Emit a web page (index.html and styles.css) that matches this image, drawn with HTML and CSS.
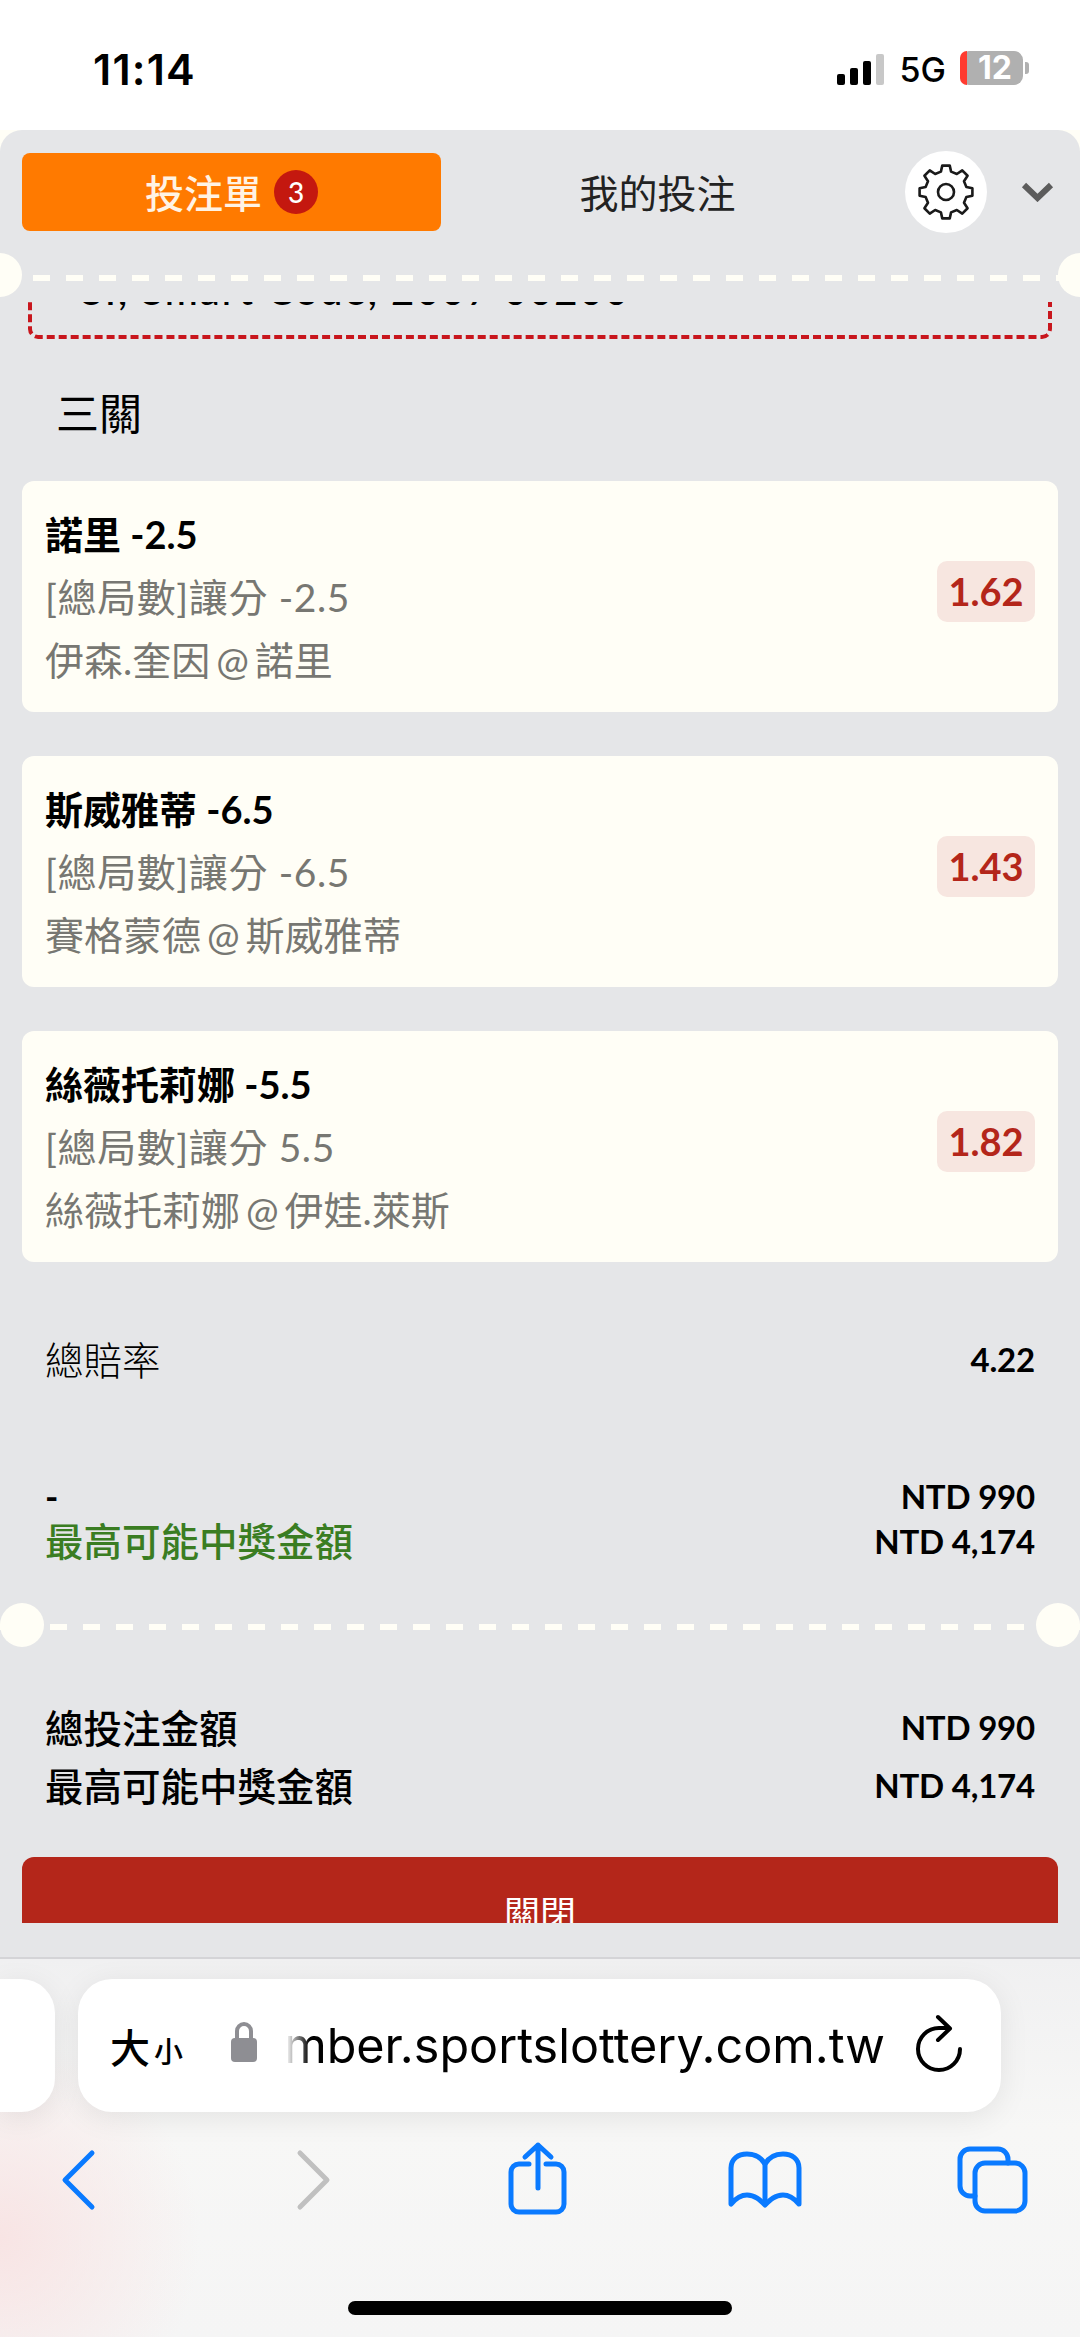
FILE: index.html
```html
<!DOCTYPE html>
<html lang="zh-Hant">
<head>
    <meta charset="UTF-8">
    <meta name="viewport" content="width=device-width, initial-scale=1.0">
    <title>投注單</title>
    <link rel="stylesheet" href="styles.css">
</head>
<body>
    <div class="status">
        <div class="time">11:14</div>
        <div class="status_right">
            <div class="signal"><span></span><span></span><span></span><span class="off"></span></div>
            <div class="net">5G</div>
            <div class="battery"><span class="low"></span><span class="level">12</span></div>
            <div class="battery_tip"></div>
        </div>
    </div>

    <div class="panel_wrap">
    <div class="panel">
        <div class="tabs">
            <div class="tab active">投注單<span class="count">3</span></div>
            <div class="tab">我的投注</div>
            <div class="gear">
                <svg width="56" height="56" viewBox="0 0 56 56">
                    <polygon points="22.92,7.63 24.25,1.6 31.75,1.6 33.08,7.63 38.82,10 44.25,6.43 49.57,11.75 46,17.18 48.37,22.92 54.4,24.25 54.4,31.75 48.37,33.08 46,38.82 49.57,44.25 44.25,49.57 38.82,46 33.08,48.37 31.75,54.4 24.25,54.4 22.92,48.37 17.18,46 11.75,49.57 6.43,44.25 10,38.82 7.63,33.08 1.6,31.75 1.6,24.25 7.63,22.92 10,17.18 6.43,11.75 11.75,6.43 17.18,10"></polygon>
                    <circle cx="28" cy="28" r="8"></circle>
                </svg>
            </div>
            <svg class="chevron" width="33" height="20" viewBox="0 0 33 20">
                <path d="M3 3 L16.5 16 L30 3"></path>
            </svg>
        </div>

        <div class="cut cut_top"></div>

        <div class="slip">
            <div class="promo">
                <div class="promo_text">SI, Smart Code, 2007 00200</div>
            </div>

            <div class="parlay">三關</div>

            <div class="bet">
                <div class="bet_info">
                    <div class="bet_name">諾里 -2.5</div>
                    <div class="bet_line bet_market">[總局數]讓分 -2.5</div>
                    <div class="bet_line bet_match">伊森.奎因 @ 諾里</div>
                </div>
                <div class="odds">1.62</div>
            </div>
            <div class="bet">
                <div class="bet_info">
                    <div class="bet_name">斯威雅蒂 -6.5</div>
                    <div class="bet_line bet_market">[總局數]讓分 -6.5</div>
                    <div class="bet_line bet_match">賽格蒙德 @ 斯威雅蒂</div>
                </div>
                <div class="odds">1.43</div>
            </div>
            <div class="bet">
                <div class="bet_info">
                    <div class="bet_name">絲薇托莉娜 -5.5</div>
                    <div class="bet_line bet_market">[總局數]讓分 5.5</div>
                    <div class="bet_line bet_match">絲薇托莉娜 @ 伊娃.萊斯</div>
                </div>
                <div class="odds">1.82</div>
            </div>

            <div class="row row_odds">
                <div class="label label_light">總賠率</div>
                <div class="value">4.22</div>
            </div>

            <div class="group_stake">
                <div class="row row_tight">
                    <div class="label_dash">-</div>
                    <div class="value">NTD 990</div>
                </div>
                <div class="row row_tight">
                    <div class="label label_green">最高可能中獎金額</div>
                    <div class="value">NTD 4,174</div>
                </div>
            </div>

            <div class="cut cut_mid"></div>

            <div class="group_total">
                <div class="row row_total">
                    <div class="label label_bold">總投注金額</div>
                    <div class="value">NTD 990</div>
                </div>
                <div class="row row_total">
                    <div class="label label_bold">最高可能中獎金額</div>
                    <div class="value">NTD 4,174</div>
                </div>
            </div>

            <div class="close_btn">關閉</div>
        </div>
    </div>
    </div>

    <div class="toolbar">
        <div class="address_row">
            <div class="prev_tab"></div>
            <div class="address">
                <div class="text_size"><span class="big">大</span><span class="small">小</span></div>
                <svg class="lock" width="28" height="42" viewBox="0 0 28 42">
                    <path class="lock_arc" d="M7 20 V10 a7 7 0 0 1 14 0 V20"></path>
                    <rect x="1" y="17" width="26" height="24" rx="4"></rect>
                </svg>
                <div class="url"><span>number.sportslottery.com.tw</span></div>
                <svg class="reload" width="60" height="64" viewBox="0 0 60 64">
                    <path d="M51 35 A21 21 0 1 1 30 14 H38"></path>
                    <path d="M29 3 L41 14.5 L29 26"></path>
                </svg>
            </div>
        </div>
        <div class="nav">
            <svg class="nav_back" width="80" height="88" viewBox="0 0 80 88"><path d="M54 21 L27 48 L54 75"></path></svg>
            <svg class="nav_next" width="80" height="88" viewBox="0 0 80 88"><path d="M26 21 L53 48 L26 75"></path></svg>
            <svg class="nav_share" width="80" height="88" viewBox="0 0 80 88">
                <path d="M31 32 H21 a8 8 0 0 0 -8 8 V72 a8 8 0 0 0 8 8 H58 a8 8 0 0 0 8 -8 V40 a8 8 0 0 0 -8 -8 H48"></path>
                <path d="M40 56 V13 M27 25 L40 13 L53 25"></path>
            </svg>
            <svg class="nav_book" width="80" height="88" viewBox="0 0 80 88">
                <path d="M6 72 V36 C6 27 13 22 22 22 C30 22 36 25 40 32 C44 25 50 22 58 22 C67 22 74 27 74 36 V72 C68 65 62 63 58 63 C50 63 45 68 40 73 C35 68 30 63 22 63 C18 63 12 65 6 72 Z"></path>
                <path d="M40 32 V72"></path>
            </svg>
            <svg class="nav_tabs" width="80" height="88" viewBox="0 0 80 88">
                <path d="M23 64 H18 a10 10 0 0 1 -10 -10 V27 a10 10 0 0 1 10 -10 H46 a10 10 0 0 1 10 10 V31"></path>
                <rect x="23" y="31" width="50" height="48" rx="10"></rect>
            </svg>
        </div>
        <div class="home_bar"></div>
    </div>
</body>
</html>
```

FILE: styles.css
```css
*{
    margin: 0;
    padding: 0;
    box-sizing: border-box;
}

body{
    width: 1080px;
    height: 2337px;
    overflow: hidden;
    background-color: #fff;
    font-family: Lato, "Noto Sans CJK TC", sans-serif;
    color: #000;
}

/* status bar */
.status{
    height: 130px;
    display: flex;
    justify-content: space-between;
    padding: 46px 51px 0 93px;
    background-color: #fff;
}
.time{
    font-family: Inter, sans-serif;
    font-size: 43px;
    line-height: 46px;
    font-weight: 600;
    letter-spacing: 1.2px;
}
.status_right{
    display: flex;
    align-items: flex-start;
    padding-top: 5px;
}
.signal{
    display: flex;
    align-items: flex-end;
    gap: 5px;
    height: 32px;
    margin-top: 2px;
}
.signal span{
    width: 8px;
    border-radius: 2px;
    background-color: #000;
}
.signal span:nth-child(1){ height: 11px; }
.signal span:nth-child(2){ height: 17px; }
.signal span:nth-child(3){ height: 24px; }
.signal span:nth-child(4){ height: 31px; }
.signal .off{ background-color: #c8c8c8; }
.net{
    margin-left: 16px;
    font-family: Inter, sans-serif;
    font-size: 34px;
    line-height: 38px;
    font-weight: 500;
}
.battery{
    display: flex;
    width: 63px;
    height: 34px;
    margin-left: 14px;
    border-radius: 9px;
    background-color: #b0b0b0;
}
.battery .low{
    width: 7px;
    border-radius: 9px 0 0 9px;
    background-color: #ff3b30;
}
.battery .level{
    flex: 1;
    text-align: center;
    font-family: Inter, sans-serif;
    font-size: 32px;
    line-height: 34px;
    font-weight: 700;
    color: #fff;
}
.battery_tip{
    width: 4px;
    height: 12px;
    margin: 11px 0 0 2px;
    border-radius: 0 3px 3px 0;
    background-color: #b0b0b0;
}

/* betting panel */
.panel_wrap{
    height: 1827px;
    background-color: #fffef6;
}
.panel{
    height: 1827px;
    padding-top: 23px;
    border-radius: 22px 22px 0 0;
    background-color: #e5e6e8;
}
.tabs{
    display: flex;
    align-items: center;
    height: 78px;
    padding-left: 22px;
}
.tab{
    display: flex;
    justify-content: center;
    align-items: center;
    width: 419px;
    height: 78px;
    padding-bottom: 3px;
    font-size: 39px;
    color: #222;
}
.tab.active{
    border-radius: 8px;
    background-color: #ff7a00;
    color: #fff3e4;
    font-weight: 500;
}
.tab + .tab{
    margin-left: 7px;
}
.count{
    width: 44px;
    height: 44px;
    margin: 3px 0 0 12px;
    border-radius: 50%;
    background-color: #c4180f;
    color: #fff;
    font-size: 28px;
    line-height: 44px;
    text-align: center;
}
.gear{
    display: flex;
    justify-content: center;
    align-items: center;
    flex-shrink: 0;
    width: 82px;
    height: 82px;
    margin-left: 38px;
    border-radius: 50%;
    background-color: #fff;
}
.gear svg *{
    fill: none;
    stroke: #1a1a1a;
    stroke-width: 2.6;
    stroke-linejoin: round;
}
.chevron{
    margin-left: 34px;
    flex-shrink: 0;
}
.chevron path{
    fill: none;
    stroke: #5c5c5c;
    stroke-width: 6;
}

/* tear line with the two notches */
.cut{
    position: relative;
    background-image: linear-gradient(to right, #fffef6 17px, transparent 17px);
    background-size: 33px 6px;
    background-repeat: repeat-x;
}
.cut::before,
.cut::after{
    content: '';
    position: absolute;
    width: 44px;
    height: 44px;
    border-radius: 50%;
    background-color: #fffef6;
}
.cut_top{
    height: 6px;
    margin-top: 44px;
    background-position: 33px 0;
}
.cut_top::before{ left: -22px; top: -22px; }
.cut_top::after{ right: -22px; top: -22px; }
.cut_mid{
    height: 44px;
    margin-top: 40px;
    background-position: 50px 21px;
}
.cut_mid::before{ left: 0; top: 0; }
.cut_mid::after{ right: 0; top: 0; }

/* scrolled content */
.slip{
    height: 1621px;
    margin-top: 21px;
    overflow: hidden;
}
.promo{
    height: 87px;
    margin: -50px 28px 0;
    padding: 14px 0 0 49px;
    border: 4px dashed #c8161d;
    border-radius: 10px;
}
.promo_text{
    font-size: 40px;
    line-height: 40px;
    font-weight: 500;
    letter-spacing: 2px;
    white-space: nowrap;
}
.parlay{
    margin: 45px 0 0 56px;
    font-size: 43px;
    line-height: 60px;
}
.bet{
    display: flex;
    justify-content: space-between;
    align-items: center;
    height: 231px;
    margin: 44px 22px 0;
    padding: 0 23px;
    border-radius: 12px;
    background-color: #fffef6;
}
.parlay + .bet{
    margin-top: 37px;
}
.bet_info{
    margin-top: 1px;
}
.bet_name{
    font-size: 38px;
    line-height: 63px;
    font-weight: 700;
}
.bet_line{
    font-size: 39px;
    line-height: 63px;
    color: #777772;
}
.bet_market{
    letter-spacing: 0.6px;
}
.bet_match{
    word-spacing: -4px;
}
.odds{
    width: 98px;
    height: 61px;
    margin-bottom: 10px;
    border-radius: 10px;
    background-color: #f7e6e0;
    color: #b4261a;
    font-size: 38px;
    line-height: 61px;
    font-weight: 700;
    text-align: center;
}

.row{
    display: flex;
    justify-content: space-between;
    align-items: center;
    margin: 0 45px;
}
.row_odds{
    height: 60px;
    margin-top: 67px;
}
.group_stake{
    margin-top: 84px;
}
.row_tight{
    height: 45px;
}
.group_total{
    margin-top: 51px;
}
.row_total{
    height: 58px;
}
.value{
    font-size: 33px;
    font-weight: 700;
    letter-spacing: -0.2px;
}
.label{
    margin-top: -3px;
    font-size: 38.5px;
}
.label_light{
    font-weight: 300;
}
.label_dash{
    font-size: 36px;
    font-weight: 700;
}
.label_green{
    font-weight: 500;
    color: #3a7d22;
}
.label_bold{
    font-weight: 500;
}
.close_btn{
    height: 112px;
    margin: 43px 22px 0;
    border-radius: 12px;
    background-color: #b4261a;
    color: #fff;
    font-size: 36px;
    line-height: 112px;
    text-align: center;
}

/* safari toolbar */
.toolbar{
    position: relative;
    height: 380px;
    border-top: 2px solid #d4d4d7;
    background-color: #f5f5f5;
    background-image: radial-gradient(circle at 0 280px, #f8e4e4 0, rgba(248,228,228,0) 200px),
                      linear-gradient(#f0f0f1, #f7f7f6 45%, #f5f5f5);
}
.address_row{
    display: flex;
    gap: 23px;
    height: 133px;
    margin-top: 20px;
}
.prev_tab{
    width: 55px;
    border-radius: 0 34px 34px 0;
    background-color: #fff;
    box-shadow: 0 6px 30px rgba(0,0,0,0.08);
}
.address{
    display: flex;
    align-items: center;
    width: 923px;
    padding-left: 32px;
    border-radius: 34px;
    background-color: #fff;
    box-shadow: 0 6px 30px rgba(0,0,0,0.08);
}
.text_size{
    display: flex;
    align-items: baseline;
    width: 120px;
    flex-shrink: 0;
    font-family: "Noto Sans CJK TC", sans-serif;
    font-weight: 500;
}
.big{
    font-size: 40px;
}
.small{
    margin-left: 4px;
    font-size: 29px;
}
.lock{
    flex-shrink: 0;
    margin-top: -8px;
}
.lock rect{
    fill: #8e8e93;
}
.lock_arc{
    fill: none;
    stroke: #8e8e93;
    stroke-width: 4;
}
.url{
    position: relative;
    display: flex;
    justify-content: flex-end;
    width: 605px;
    margin-left: 22px;
    overflow: hidden;
    font-family: Inter, sans-serif;
    font-size: 48.5px;
    line-height: 62px;
    white-space: nowrap;
}
.url::before{
    content: '';
    position: absolute;
    left: 0;
    top: 0;
    width: 30px;
    height: 100%;
    background-image: linear-gradient(to right, #fff 20%, rgba(255,255,255,0));
}
.reload{
    flex-shrink: 0;
    margin-left: 24px;
}
.reload path{
    fill: none;
    stroke: #000;
    stroke-width: 4;
    stroke-linecap: round;
    stroke-linejoin: round;
}
.nav{
    display: flex;
    margin-top: 20px;
    padding-left: 38px;
}
.nav svg{
    flex-shrink: 0;
}
.nav_next{ margin-left: 156px; }
.nav_share{ margin-left: 144px; }
.nav_book{ margin-left: 147px; }
.nav_tabs{ margin-left: 147px; }
.nav svg *{
    fill: none;
    stroke: #0a7aff;
    stroke-width: 5;
    stroke-linecap: round;
    stroke-linejoin: round;
}
.nav .nav_next *{
    stroke: #c0c0c0;
}
.home_bar{
    position: absolute;
    left: 348px;
    top: 342px;
    width: 384px;
    height: 14px;
    border-radius: 7px;
    background-color: #000;
}
```
